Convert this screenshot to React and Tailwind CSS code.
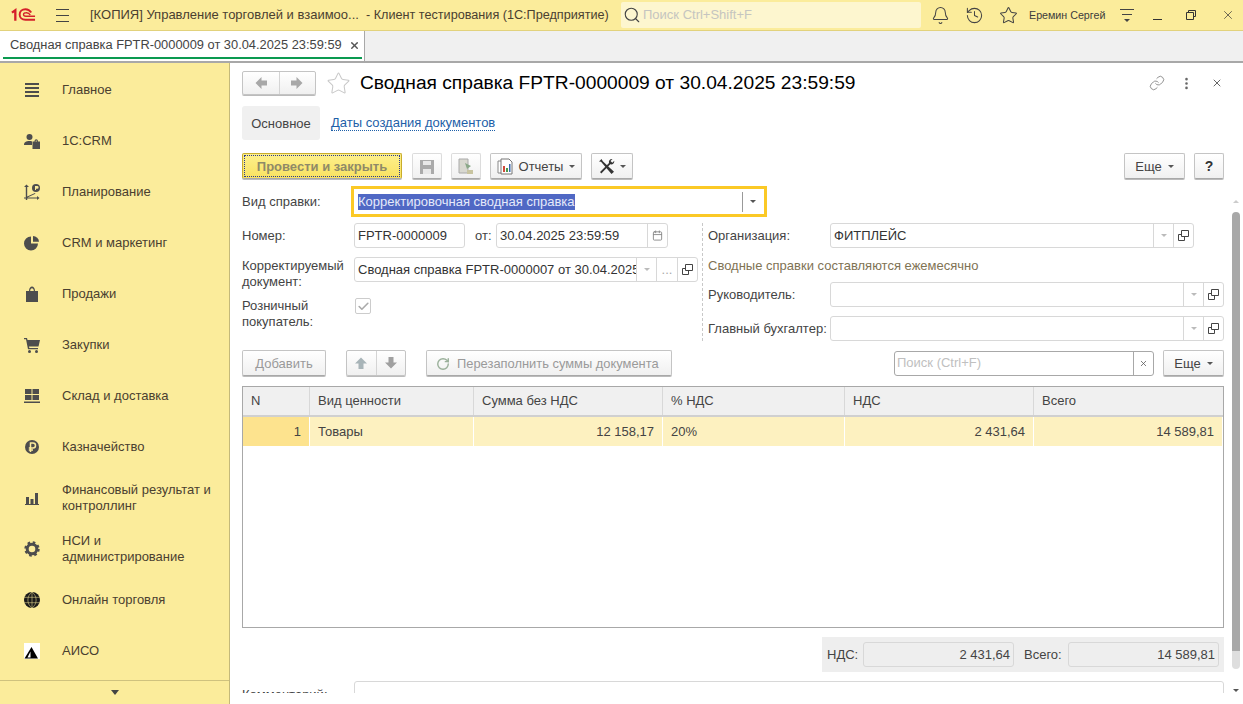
import { X, Bell, History, Star, Search, Link as LinkIcon, EllipsisVertical, Calendar, Check, RotateCw } from 'lucide-react';

const menu = [
    ['Главное', 'lines'],
    ['1С:CRM', 'crm'],
    ['Планирование', 'plan'],
    ['CRM и маркетинг', 'pie'],
    ['Продажи', 'bag'],
    ['Закупки', 'cart'],
    ['Склад и доставка', 'store'],
    ['Казначейство', 'rub'],
    ['Финансовый результат и контроллинг', 'bars'],
    ['НСИ и администрирование', 'gear'],
    ['Онлайн торговля', 'globe'],
    ['АИСО', 'aiso'],
];

function MenuIcon({ name }) {
    const c = '#4d4d4d';
    return (
        <svg width="16" height="16" viewBox="0 0 16 16" fill={c}>
            {name === 'lines' && (
                <>
                    <rect x="1" y="1" width="14" height="2" />
                    <rect x="1" y="5" width="14" height="2" />
                    <rect x="1" y="9" width="14" height="2" />
                    <rect x="1" y="13" width="14" height="2" />
                </>
            )}
            {name === 'crm' && (
                <>
                    <circle cx="5.500" cy="4" r="3" />
                    <path d="M0 12c0-3 2-4 5.500-4 1 0 2 .1 2.500.4V12z" />
                    <path d="M8.500 8.500h7.500V16H8.500zM10.500 8.500c0-3 3.500-3 3.500 0h-1c0-1.500-1.500-1.500-1.500 0z" />
                </>
            )}
            {name === 'plan' && (
                <>
                    <path d="M2.500 0.500 5 3H3.200v9.500L11 9l.4.8-8 3.700H13v-1.500l2.500 2-2.500 2v-1.500H3.200V16h-1.400v-1.500H0v-1h1.800V3H0z" />
                    <circle cx="12" cy="4" r="4" />
                    <path d="M11 2h2.200a1.300 1.300 0 0 1 0 2.800H12V6h-1z" fill="#fbec9b" />
                </>
            )}
            {name === 'pie' && (
                <>
                    <path d="M7 1.500V8.500h7A7 7 0 1 1 7 1.500z" />
                    <path d="M9 1a6 6 0 0 1 6 5.800H9z" />
                </>
            )}
            {name === 'bag' && (
                <>
                    <path d="M2 5h12v11H2z" />
                    <path d="M5 5c0-6 6-6 6 0H9.800c0-3.800-3.600-3.800-3.600 0z" />
                </>
            )}
            {name === 'cart' && (
                <>
                    <path d="M0 1h3l.5 2H16l-1.500 6.500H5l.3 1.500H14v1.300H4L2 2.300H0z" />
                    <circle cx="5.500" cy="14.500" r="1.500" />
                    <circle cx="12.500" cy="14.500" r="1.500" />
                </>
            )}
            {name === 'store' && (
                <>
                    <rect x="1" y="1" width="6.500" height="5" />
                    <rect x="8.500" y="1" width="6.500" height="5" />
                    <rect x="1" y="7" width="6.500" height="5" />
                    <rect x="8.500" y="7" width="6.500" height="5" />
                    <rect x="0" y="13.500" width="16" height="1.500" />
                </>
            )}
            {name === 'rub' && (
                <>
                    <circle cx="8" cy="8" r="7" />
                    <path d="M6.500 13V4h2.500a2.400 2.400 0 0 1 0 5H4.800M4.800 11H9" stroke="#fbec9b" strokeWidth="1.500" fill="none" />
                </>
            )}
            {name === 'bars' && (
                <>
                    <rect x="2" y="7" width="3" height="7" />
                    <rect x="6.500" y="9" width="3" height="5" />
                    <rect x="11" y="3" width="3" height="11" />
                    <rect x="1" y="14" width="14" height="1" />
                </>
            )}
            {name === 'gear' && (
                <>
                    <circle cx="8" cy="8" r="4.800" fill="none" stroke={c} strokeWidth="3" />
                    <circle cx="8" cy="8" r="6.500" fill="none" stroke={c} strokeWidth="2.400" strokeDasharray="2.550 2.550" />
                </>
            )}
            {name === 'globe' && (
                <>
                    <circle cx="8" cy="8" r="8" fill="#1a1a1a" />
                    <path d="M0 5.300h16M0 10.700h16M8 0v16M8 0C2.500 4 2.500 12 8 16M8 0c5.500 4 5.500 12 0 16" stroke="#fbec9b" strokeWidth=".5" fill="none" />
                </>
            )}
            {name === 'aiso' && (
                <>
                    <rect width="16" height="16" fill="#fff" />
                    <path d="M7.500 4 14 15.500H0.500z" fill="#000" />
                    <path d="M6.500 8.500 3.500 14.500h3z" fill="#fff" />
                </>
            )}
        </svg>
    );
}

function Logo() {
    return (
        <svg width="26" height="16" viewBox="0 0 26 16" fill="none" stroke="#d5202a">
            <path d="M1 5.500 4.500 3V14" strokeWidth="2.400" />
            <path d="M21 5.500C19.500 3 17.500 2 15 2c-3.500 0-6 2.500-6 5.500S11.500 13 15 13h10" strokeWidth="2" />
            <path d="M20 8c-.8-1.500-2.500-2.500-4.500-2.300-1.500.1-2.500 1-2.500 1.800s1 1.700 2.500 1.800H25" strokeWidth="1.400" />
        </svg>
    );
}

function Caret({ className = 'border-t-[#555]' }) {
    return <span className={`inline-block h-0 w-0 border-x-[3px] border-t-[3px] border-x-transparent ${className}`} />;
}

function OpenIcon() {
    return (
        <svg width="11" height="11" viewBox="0 0 11 11" fill="none" stroke="#444">
            <path d="M3.500.5h7v6h-7zM3.500 4.500h-3v6h6V6.500" />
        </svg>
    );
}

function BlockArrow({ rotate, color }) {
    // filled arrow pointing up, turned for the other directions
    return (
        <svg width="14" height="14" viewBox="0 0 14 14" fill={color} className={rotate}>
            <path d="M7 1.500 13 7.500H9.500V13h-5V7.500H1z" />
        </svg>
    );
}

function Btn({ children, className = '', bg = 'from-white to-[#f0f0f0]', muted }) {
    return (
        <div className={`flex h-[26px] shrink-0 items-center justify-center rounded-[2px] border border-[#c4c4c4] border-b-[#a8a8a8] bg-gradient-to-b pt-[1px] shadow-[0_1px_0_#bbb] ${bg} ${muted ? 'text-[#9a9a9a]' : 'text-[#444]'} ${className}`}>
            {children}
        </div>
    );
}

function Field({ children, className = '' }) {
    return (
        <div className={`flex h-[25px] items-center overflow-hidden rounded-[3px] border border-[#d8d8d8] bg-white ${className}`}>
            {children}
        </div>
    );
}

function FieldBtn({ children, className = 'w-[20px]' }) {
    return (
        <div className={`flex h-full shrink-0 items-center justify-center border-l border-[#d8d8d8] ${className}`}>
            {children}
        </div>
    );
}

function RefField({ className = '' }) {
    return (
        <Field className={className}>
            <div className="flex-1" />
            <FieldBtn><Caret className="border-t-[#bbb]" /></FieldBtn>
            <FieldBtn><OpenIcon /></FieldBtn>
        </Field>
    );
}

const columns = [
    ['N', '1', 'text-right pr-[8px]'],
    ['Вид ценности', 'Товары', ''],
    ['Сумма без НДС', '12 158,17', 'text-right pr-[8px]'],
    ['% НДС', '20%', ''],
    ['НДС', '2 431,64', 'text-right pr-[8px]'],
    ['Всего', '14 589,81', 'text-right pr-[8px]'],
];

export default function App() {
    return (
        <div className="flex h-[704px] w-[1243px] flex-col overflow-hidden bg-white text-[13px] text-[#444] [font-family:'Liberation_Sans',Arial,sans-serif]">
            {/* Title bar */}
            <div className="flex h-[31px] shrink-0 items-center border-b border-[#e2d27c] bg-[#fbec9b]">
                <div className="ml-[11px] flex w-[25px] items-center">
                    <Logo />
                </div>
                <div className="ml-[20px] flex h-[13px] w-[13px] flex-col justify-between">
                    <div className="h-px bg-[#444]" />
                    <div className="h-px bg-[#444]" />
                    <div className="h-px bg-[#444]" />
                </div>
                <div className="ml-[21px] w-[272px] whitespace-nowrap text-[#4a4030]">[КОПИЯ] Управление торговлей и взаимоо...</div>
                <div className="ml-[4px] w-[245px] text-[12.65px] whitespace-nowrap text-[#4a4030]">- Клиент тестирования (1С:Предприятие)</div>
                <div className="ml-[10px] flex h-[26px] w-[300px] items-center gap-[2px] rounded-[2px] bg-[#fdf6cf] pl-[2px] text-[#c5c5c0]">
                    <Search size={18} color="#444" strokeWidth={1.5} />
                    <span>Поиск Ctrl+Shift+F</span>
                </div>
                <Bell size={19} color="#444" strokeWidth={1.3} className="ml-[10px]" />
                <History size={19} color="#444" strokeWidth={1.3} className="ml-[15px]" />
                <Star size={19} color="#444" strokeWidth={1.3} className="ml-[15px]" />
                <span className="ml-[11px] w-[76px] text-[10.7px] whitespace-nowrap text-[#3d3d3d]">Еремин Сергей</span>
                <div className="ml-[15px] flex w-[14px] flex-col items-center gap-[4px]">
                    <div className="h-px w-[14px] bg-[#444]" />
                    <div className="h-px w-[10px] bg-[#444]" />
                    <Caret className="border-t-[#444]" />
                </div>
                <div className="mt-[9px] ml-[19px] h-px w-[9px] bg-[#333]" />
                <svg width="10" height="10" viewBox="0 0 10 10" fill="none" stroke="#333" className="ml-[24px]">
                    <path d="M2.500 2.500V.5h7v6h-2M.5 2.500h7v7h-7z" />
                </svg>
                <X size={14} color="#333" strokeWidth={1.2} className="ml-[25px]" />
            </div>

            {/* Open tabs */}
            <div className="flex h-[32px] shrink-0 border-b-2 border-[#a8a8a8] bg-[#f0f0f0]">
                <div className="relative flex w-[365px] shrink-0 items-center border-r border-[#a8a8a8] bg-white pb-[2px] pl-[10px] text-[#444]">
                    <span className="text-[12.85px] whitespace-nowrap">Сводная справка FPTR-0000009 от 30.04.2025 23:59:59</span>
                    <X size={11} color="#555" strokeWidth={3} className="ml-[7px]" />
                    <div className="absolute right-[2px] bottom-[2px] left-[3px] h-[2px] bg-[#0a9a50]" />
                </div>
            </div>

            <div className="flex min-h-0 flex-1">
                {/* Section panel */}
                <div className="flex w-[230px] shrink-0 flex-col border-r border-[#c4b97a] bg-[#fbec9b]">
                    <div className="flex-1 pt-[1px]">
                        {menu.map(([label, icon]) => (
                            <div key={label} className="flex h-[51px] items-center pl-[24px] text-[#4a4030]">
                                <MenuIcon name={icon} />
                                <span className="ml-[22px] w-[155px] leading-[16px]">{label}</span>
                            </div>
                        ))}
                    </div>
                    <div className="flex h-[24px] shrink-0 items-center justify-center border-t border-[#cfc27e]">
                        <span className="inline-block h-0 w-0 border-x-[4px] border-t-[5px] border-x-transparent border-t-[#444]" />
                    </div>
                </div>

                {/* Document form */}
                <div className="relative min-w-0 flex-1 overflow-hidden pr-[19px] pl-[12px]">
                    <div className="mt-[8px] flex h-[24px] items-center">
                        <div className="flex h-[24px] w-[74px] rounded-[2px] border border-[#c4c4c4] bg-gradient-to-b from-white to-[#f0f0f0] shadow-[0_1px_0_#bbb]">
                            <div className="flex flex-1 items-center justify-center border-r border-[#d4d4d4]"><BlockArrow rotate="-rotate-90" color="#a8a8a8" /></div>
                            <div className="flex flex-1 items-center justify-center"><BlockArrow rotate="rotate-90" color="#a8a8a8" /></div>
                        </div>
                        <Star size={25} color="#c8c8c8" strokeWidth={1} className="ml-[10px]" />
                        <h1 className="ml-[9px] pt-[1px] text-[19.2px] font-normal whitespace-nowrap text-black">Сводная справка FPTR-0000009 от 30.04.2025 23:59:59</h1>
                        <div className="ml-auto flex items-center">
                            <LinkIcon size={16} color="#777" strokeWidth={1.2} />
                            <EllipsisVertical size={15} color="#666" strokeWidth={2.2} className="ml-[14px]" />
                            <X size={12} color="#666" className="mr-[1px] ml-[17px]" />
                        </div>
                    </div>

                    <div className="mt-[11px] flex h-[34px] items-center">
                        <div className="flex h-[34px] w-[78px] items-center justify-center rounded-[3px] bg-[#f0f0f0] pt-[1px]">Основное</div>
                        <span className="ml-[11px] border-b border-dotted border-[#1d5fa8] leading-[14px] text-[#1d5fa8]">Даты создания документов</span>
                    </div>

                    <div className="mt-[13px] flex items-center">
                        <Btn muted bg="from-[#fdf08c] to-[#f9e260]" className="w-[160px] border-[#c9ad2c] font-bold !text-[#8f8a68] outline-1 -outline-offset-3 outline-[#2a3a90] outline-dotted">
                            Провести и закрыть
                        </Btn>
                        <Btn className="ml-[10px] w-[30px] border-[#dcdcdc]">
                            <svg width="16" height="16" viewBox="0 0 16 16" fill="#aaa"><path d="M1 1h14v14H1z" /><path d="M4 2h8v4H4zM4 10h8v5H4z" fill="#e8e8e8" /></svg>
                        </Btn>
                        <Btn className="ml-[9px] w-[30px] border-[#dcdcdc]">
                            <svg width="18" height="18" viewBox="0 0 18 18"><path d="M2 1h9v14H2z" fill="#d8d8d0" stroke="#aaa" /><path d="M8 5l6 3-4 3z" fill="#8aa888" /><path d="M10 12h6v4h-6z" fill="#c8c4a0" /></svg>
                        </Btn>
                        <Btn className="ml-[9px] w-[92px] gap-[6px]">
                            <svg width="16" height="17" viewBox="0 0 16 17"><path d="M1 3h6v12H1z" fill="#fff" stroke="#888" /><path d="M4 1h8l3 3v12H4z" fill="#fff" stroke="#777" /><path d="M6 8h2v6H6z" fill="#d04a3a" /><path d="M9 10h2v4H9z" fill="#4a9a4a" /><path d="M12 6h1.500v8H12z" fill="#3a6ab0" /></svg>
                            <span>Отчеты</span>
                            <Caret />
                        </Btn>
                        <Btn className="ml-[9px] w-[42px] gap-[5px]">
                            <svg width="17" height="17" viewBox="0 0 17 17" fill="#333">
                                <path d="M3.500 1 1 3.500 3 3.800 13.500 16l2.500-2.300L4.800 3.300z" />
                                <path d="M2 14 11 5c-.6-2 .8-4.200 3.500-4l-2 2 1.800 1.800 2-2c.2 2.700-2 4.100-4 3.500l-9 9.200z" />
                            </svg>
                            <Caret />
                        </Btn>
                        <Btn className="ml-auto w-[61px] gap-[6px]">
                            <span>Еще</span>
                            <Caret />
                        </Btn>
                        <Btn className="ml-[9px] w-[30px] text-[14px] font-bold !text-[#333]">?</Btn>
                    </div>

                    <div className="mt-[7px] flex h-[31px] items-center">
                        <span className="w-[109px]">Вид справки:</span>
                        <div className="flex h-[31px] w-[416px] items-center border-[3px] border-[#fbc926] pl-[4px]">
                            <span className="bg-[#5068c4] leading-[16px] text-[#e6eafa]">Корректировочная сводная справка</span>
                            <div className="mr-[2px] ml-auto flex h-[20px] w-[20px] items-center justify-center border-l border-[#999]"><Caret /></div>
                        </div>
                    </div>

                    {/* Header fields in two columns */}
                    <div className="mt-[6px] flex h-[118px]">
                        <div className="w-[460px] shrink-0">
                            <div className="flex items-center">
                                <span className="w-[112px]">Номер:</span>
                                <Field className="w-[111px] pl-[3px] text-[#333]">FPTR-0000009</Field>
                                <span className="ml-[10px] w-[21px]">от:</span>
                                <Field className="w-[172px] pl-[3px] text-[#333]">
                                    <span className="flex-1">30.04.2025 23:59:59</span>
                                    <FieldBtn><Calendar size={11} color="#888" /></FieldBtn>
                                </Field>
                            </div>
                            <div className="mt-[9px] flex h-[33px] items-start">
                                <span className="w-[112px] pt-[1px] leading-[16px]">Корректируемый документ:</span>
                                <Field className="w-[344px] pl-[3px] text-[#333]">
                                    <span className="min-w-0 flex-1 overflow-hidden whitespace-nowrap">Сводная справка FPTR-0000007 от 30.04.2025 23:59:59</span>
                                    <FieldBtn><Caret className="border-t-[#bbb]" /></FieldBtn>
                                    <FieldBtn className="w-[21px] text-[#aaa]">...</FieldBtn>
                                    <FieldBtn><OpenIcon /></FieldBtn>
                                </Field>
                            </div>
                            <div className="mt-[8px] flex items-start">
                                <span className="w-[112px] leading-[16px]">Розничный покупатель:</span>
                                <div className="ml-[1px] flex h-[16px] w-[16px] items-center justify-center rounded-[2px] border border-[#ccc]">
                                    <Check size={13} color="#aaa" strokeWidth={3} />
                                </div>
                            </div>
                        </div>
                        <div className="border-l border-dashed border-[#c8c8c8] pl-[5px]">
                            <div className="flex items-center">
                                <span className="w-[122px]">Организация:</span>
                                <Field className="w-[364px] pl-[3px] text-[#333]">
                                    <span className="flex-1">ФИТПЛЕЙС</span>
                                    <FieldBtn><Caret className="border-t-[#bbb]" /></FieldBtn>
                                    <FieldBtn><OpenIcon /></FieldBtn>
                                </Field>
                            </div>
                            <div className="mt-[11px] h-[14px] leading-[14px] text-[#7f7354]">Сводные справки составляются ежемесячно</div>
                            <div className="mt-[9px] flex items-center">
                                <span className="w-[122px]">Руководитель:</span>
                                <RefField className="w-[394px]" />
                            </div>
                            <div className="mt-[9px] flex items-center">
                                <span className="w-[122px] whitespace-nowrap">Главный бухгалтер:</span>
                                <RefField className="w-[394px]" />
                            </div>
                        </div>
                    </div>

                    {/* Table command bar */}
                    <div className="mt-[9px] flex items-center">
                        <Btn muted className="w-[84px]">Добавить</Btn>
                        <div className="ml-[20px] flex h-[26px] w-[60px] rounded-[2px] border border-[#c4c4c4] bg-gradient-to-b from-white to-[#f0f0f0] shadow-[0_1px_0_#bbb]">
                            <div className="flex flex-1 items-center justify-center border-r border-[#d4d4d4]"><BlockArrow color="#a8b4b8" /></div>
                            <div className="flex flex-1 items-center justify-center"><BlockArrow rotate="rotate-180" color="#a0a0a0" /></div>
                        </div>
                        <Btn muted className="ml-[20px] w-[246px] justify-start gap-[7px] pl-[9px]">
                            <RotateCw size={14} color="#9ab09a" strokeWidth={2.4} />
                            <span className="text-[12.9px] whitespace-nowrap">Перезаполнить суммы документа</span>
                        </Btn>
                        <div className="ml-auto flex h-[25px] w-[260px] items-center rounded-[3px] border border-[#a8a8a8] bg-white pl-[2px] text-[#c0c0c0]">
                            <span className="flex-1">Поиск (Ctrl+F)</span>
                            <div className="flex h-full w-[20px] items-center justify-center border-l border-[#a8a8a8]"><X size={9} color="#555" strokeWidth={2} /></div>
                        </div>
                        <Btn className="ml-[9px] w-[61px] gap-[6px]">
                            <span>Еще</span>
                            <Caret />
                        </Btn>
                    </div>

                    {/* Table */}
                    <div className="mt-[10px] h-[242px] border border-[#a8a8a8]">
                        <div className="grid h-[30px] grid-cols-[67px_164px_189px_182px_189px_1fr] border-b-2 border-[#d0d0d0] bg-[#f0f0f0]">
                            {columns.map(([head]) => (
                                <div key={head} className="flex items-center border-r border-[#d8d8d8] pl-[8px] last:border-r-0">{head}</div>
                            ))}
                        </div>
                        <div className="grid h-[29px] grid-cols-[67px_164px_189px_182px_189px_1fr] border-b-2 border-[#e4e4e4]">
                            {columns.map(([head, value, align], i) => (
                                <div key={head} className={`border-r border-white pl-[8px] leading-[29px] ${i === 0 ? 'bg-[#fde38e]' : 'bg-[#fdf1c0]'} ${align}`}>{value}</div>
                            ))}
                        </div>
                    </div>

                    {/* Totals */}
                    <div className="mt-[9px] ml-auto flex h-[35px] w-[402px] items-center bg-[#eeeeee] pl-[5px]">
                        <span className="w-[36px]">НДС:</span>
                        <div className="h-[25px] w-[151px] rounded-[3px] border border-[#d8d8d8] pr-[3px] text-right leading-[23px]">2 431,64</div>
                        <span className="ml-[10px] w-[44px]">Всего:</span>
                        <div className="h-[25px] w-[151px] rounded-[3px] border border-[#d8d8d8] pr-[3px] text-right leading-[23px]">14 589,81</div>
                    </div>

                    {/* The form scrolls: the comment row is cut off at the bottom of the area */}
                    <div className="mt-[9px] flex h-[12px] overflow-hidden">
                        <span className="w-[112px] pt-[4px] whitespace-nowrap">Комментарий:</span>
                        <div className="h-[40px] flex-1 rounded-[3px] border border-[#d8d8d8]" />
                    </div>

                    {/* Scrollbar */}
                    <div className="absolute top-[137px] right-[3px] flex w-[8px] flex-col items-center">
                        <Caret className="rotate-180 border-t-[#ccc]" />
                        <div className="mt-[9px] h-[443px] w-[8px] rounded-[4px] bg-[#a8a8a8]" />
                        <div className="-mt-[4px] h-[18px] w-[8px] rounded-b-[4px] bg-[#dedede]" />
                        <div className="mt-[9px]"><Caret /></div>
                    </div>
                </div>
            </div>
        </div>
    );
}
